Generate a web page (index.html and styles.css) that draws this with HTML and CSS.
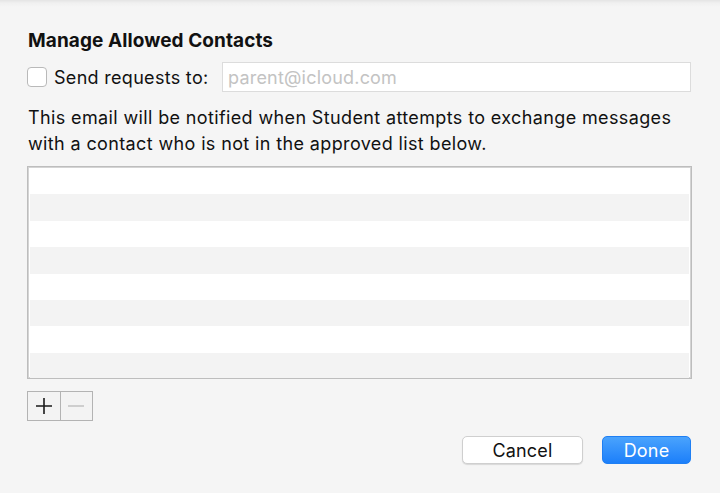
FILE: index.html
```html
<!DOCTYPE html>
<html>
<head>
<meta charset="utf-8">
<link rel="stylesheet" href="styles.css">
</head>
<body>
<div class="dialog">
  <h1 class="title">Manage Allowed Contacts</h1>
  <div class="send-row">
    <label class="check-label"><span class="checkbox"></span><span>Send requests to:</span></label>
    <input class="email" type="text" placeholder="parent@icloud.com">
  </div>
  <p class="note">This email will be notified when Student attempts to exchange messages with a contact who is not in the approved list below.</p>
  <div class="list">
    <div class="row"></div><div class="row alt"></div>
    <div class="row"></div><div class="row alt"></div>
    <div class="row"></div><div class="row alt"></div>
    <div class="row"></div><div class="row alt"></div>
  </div>
  <div class="seg">
    <button class="seg-btn add" aria-label="Add"><svg width="18" height="18" viewBox="0 0 18 18"><path d="M9 1v16M1 9h16" stroke="#1a1a1a" stroke-width="1.6" fill="none"/></svg></button>
    <button class="seg-btn remove" aria-label="Remove"><svg width="18" height="18" viewBox="0 0 18 18"><path d="M1 9h16" stroke="#bdbdbd" stroke-width="1.4" fill="none"/></svg></button>
  </div>
  <div class="footer">
    <button class="btn cancel">Cancel</button>
    <button class="btn done">Done</button>
  </div>
</div>
</body>
</html>
```
FILE: styles.css
```css
html, body {
  margin: 0;
  padding: 0;
}
body {
  width: 720px;
  height: 493px;
  overflow: hidden;
  background: linear-gradient(to bottom, #e4e4e4 0px, #f0f0f0 3px, #f5f5f5 7px, #f5f5f5 100%);
  font-family: Inter, "Noto Sans", sans-serif;
  color: #111;
}
.dialog {
  padding: 28px 28px 0 27px;
  display: flex;
  flex-direction: column;
}
.title {
  margin: 0 0 0 1px;
  font-size: 19px;
  font-weight: 700;
  line-height: 26px;
  letter-spacing: 0.08px;
}
.send-row {
  margin-top: 8px;
  display: flex;
  align-items: center;
  height: 30px;
}
.check-label {
  display: flex;
  align-items: center;
  font-size: 18px;
  letter-spacing: 0.3px;
}
.checkbox {
  width: 18px;
  height: 18px;
  border: 1px solid #b9b9b9;
  border-radius: 4px;
  background: #fff;
  margin-right: 7px;
  box-sizing: content-box;
}
.email {
  margin-left: auto;
  margin-right: 1px;
  width: 469px;
  height: 30px;
  box-sizing: border-box;
  border: 1px solid #dcdcdc;
  background: #fff;
  font-family: inherit;
  font-size: 18px;
  letter-spacing: 0.2px;
  padding: 0 5px;
  outline: none;
}
.email::placeholder {
  color: #c3c3c3;
}
.note {
  margin: 13px 0 0 1px;
  font-size: 18px;
  line-height: 26px;
  letter-spacing: 0.37px;
}
.list {
  margin-top: 9px;
  width: 665px;
  height: 213px;
  box-sizing: border-box;
  border: 1px solid #bdbdbd;
  box-shadow: inset 0 0 0 1px #d4d4d4;
  background: #fff;
  padding: 1px 2px 0 2px;
  display: flex;
  flex-direction: column;
  overflow: hidden;
}
.row {
  height: 26.4px;
  flex: none;
  background: #fff;
}
.row.alt {
  background: #f3f3f3;
}
.seg {
  margin-top: 12px;
  display: flex;
  width: 66px;
  height: 30px;
  box-sizing: border-box;
  border: 1px solid #b3b3b3;
  background: #f3f3f3;
}
.seg-btn {
  flex: 1;
  margin: 0;
  padding: 0;
  border: none;
  background: transparent;
  display: flex;
  align-items: center;
  justify-content: center;
}
.seg-btn.add {
  border-right: 1px solid #b3b3b3;
}
.footer {
  margin-top: 15px;
  display: flex;
  justify-content: flex-end;
  gap: 19px;
  padding-right: 1px;
}
.btn {
  height: 28px;
  box-sizing: border-box;
  font-family: inherit;
  font-size: 18px;
  letter-spacing: 0.2px;
  border-radius: 5px;
  padding: 0;
}
.cancel {
  width: 121px;
  background: #fff;
  border: 1px solid #cfcfcf;
  box-shadow: 0 1px 1px rgba(0,0,0,0.12);
  color: #111;
}
.done {
  width: 89px;
  border: 1px solid #1f7ff3;
  background: linear-gradient(to bottom, #4aa3fd, #1c7ffa);
  color: #fff;
}
```
